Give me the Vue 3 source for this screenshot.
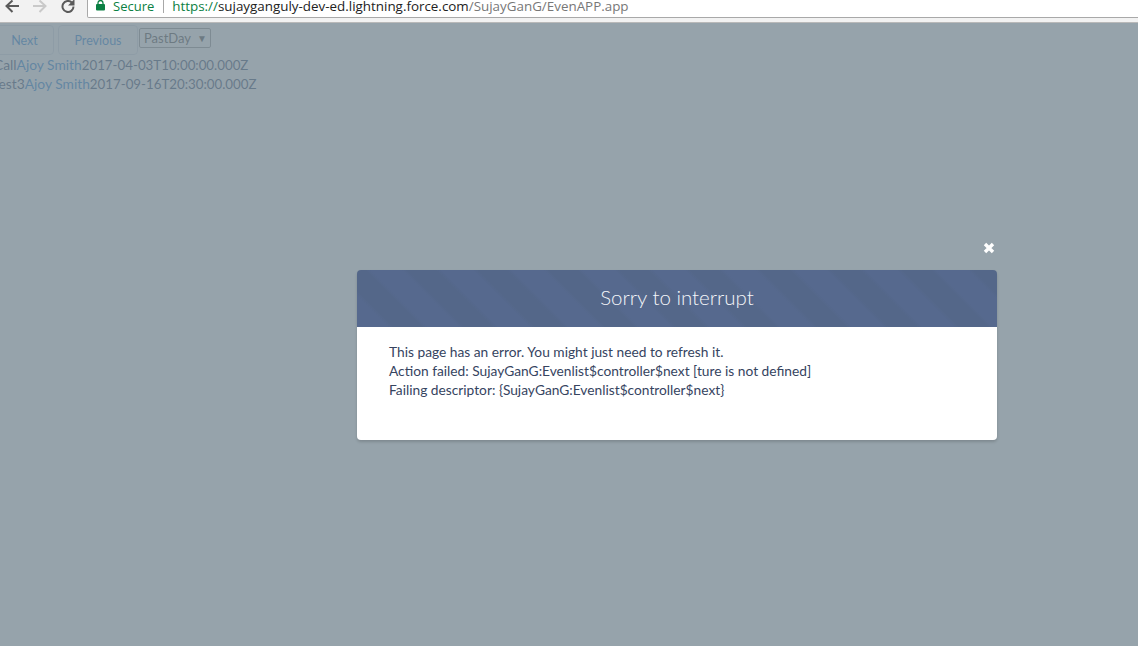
<template>
  <div class="page">
    <div class="toolbar">
      <svg class="nav-icon back" width="18" height="16" viewBox="0 0 18 16"><path d="M16 6H4M9.500.5 3.500 6l6 6" fill="none" stroke="#5a5a5a" stroke-width="2" /></svg>
      <svg class="nav-icon forward" width="18" height="16" viewBox="0 0 18 16"><path d="M2 6h12M8.500.5l6 5.500-6 6" fill="none" stroke="#c9c9c9" stroke-width="2" /></svg>
      <svg class="nav-icon reload" width="16" height="16" viewBox="0 0 16 16"><path d="M13.500 6.500a5.500 5.500 0 1 1-1.700-4" fill="none" stroke="#5a5a5a" stroke-width="2" /><path d="M14.500-1v6.500H8z" fill="#5a5a5a" /></svg>
      <div class="url-box">
        <svg class="lock" width="9" height="11" viewBox="0 0 9 11"><path d="M2 4.500V3a2.500 2.500 0 0 1 5 0v1.500" fill="none" stroke="#0b8043" stroke-width="1.300" /><rect y="4" width="9" height="6.500" rx="1" fill="#0b8043" /></svg>
        <span class="secure">Secure</span>
        <span class="divider"></span>
        <span class="url"><span class="scheme">https://</span>sujayganguly-dev-ed.lightning.force.com<span class="path">/SujayGanG/EvenAPP.app</span></span>
      </div>
    </div>

    <div class="content">
      <div class="controls">
        <button class="btn btn-next">Next</button>
        <button class="btn btn-prev">Previous</button>
        <div class="select">PastDay <span class="caret">▼</span></div>
      </div>
      <div v-for="row in events" :key="row.name" class="event-row" :class="row.cls">
        <span>{{ row.name }}</span><a>{{ row.owner }}</a><span class="date">{{ row.date }}</span>
      </div>

      <div class="backdrop">
        <div class="modal-wrap">
          <svg class="close" width="14" height="14" viewBox="0 0 14 14"><path d="M3 3l8 8M11 3l-8 8" fill="none" stroke="#fff" stroke-width="3.400" /></svg>
          <div class="modal">
            <div class="modal-header">Sorry to interrupt</div>
            <div class="modal-body">
              <div v-for="line in messages" :key="line">{{ line }}</div>
            </div>
          </div>
        </div>
      </div>
    </div>
  </div>
</template>

<script setup>
const events = [
  { name: "Call", owner: "Ajoy Smith", date: "2017-04-03T10:00:00.000Z", cls: "row-one" },
  { name: "Test3", owner: "Ajoy Smith", date: "2017-09-16T20:30:00.000Z", cls: "row-two" },
];

const messages = [
  "This page has an error. You might just need to refresh it.",
  "Action failed: SujayGanG:Evenlist$controller$next [ture is not defined]",
  "Failing descriptor: {SujayGanG:Evenlist$controller$next}",
];
</script>

<style>
html,
body {
  margin: 0;
  overflow: hidden;
}
</style>

<style scoped>
.page {
  width: 1138px;
  height: 646px;
  overflow: hidden;
  display: flex;
  flex-direction: column;
  font-family: Lato, "Open Sans", sans-serif;
}

.toolbar {
  height: 22px;
  flex-shrink: 0;
  display: flex;
  align-items: flex-start;
  background: #f2f2f2;
  border-bottom: 1px solid #b9b9b9;
}

.nav-icon {
  flex-shrink: 0;
}

.back {
  margin-left: 3px;
}

.forward {
  margin-left: 10px;
}

.reload {
  margin-left: 11px;
}

.url-box {
  margin-left: 11px;
  height: 18px;
  flex: 1 0 1060px;
  box-sizing: border-box;
  display: flex;
  align-items: flex-start;
  padding-left: 8px;
  background: #fff;
  border: 1px solid #a9a9a9;
  border-top: 0;
  border-radius: 0 0 2px 2px;
  font-family: "Open Sans", sans-serif;
  font-size: 13.4px;
  line-height: 13px;
  white-space: nowrap;
}

.lock {
  flex-shrink: 0;
}

.secure {
  margin-left: 8px;
  color: #0b8043;
  font-size: 13px;
}

.divider {
  width: 1px;
  height: 13px;
  margin: 0 8px 0 9px;
  background: #a8a8a8;
}

.url {
  color: #222;
}

.scheme {
  color: #0b8043;
}

.path {
  color: #777;
}

.content {
  position: relative;
  flex: 1;
  padding-top: 2px;
  font-size: 13.8px;
  color: #16325c;
}

.controls {
  display: flex;
  align-items: flex-start;
  margin-left: -8px;
  height: 30px;
}

.btn {
  height: 30px;
  box-sizing: border-box;
  font: inherit;
  font-size: 12.5px;
  color: #0070d2;
  background: #fff;
  border: 1px solid #d8dde6;
  border-radius: 4px;
}

.btn-next {
  width: 62px;
  padding-left: 9px;
}

.btn-prev {
  width: 80px;
  margin-left: 4px;
}

.select {
  margin: 3px 0 0 1px;
  width: 72px;
  height: 20px;
  box-sizing: border-box;
  display: flex;
  align-items: center;
  padding-left: 4px;
  font-size: 13px;
  color: #333;
  border: 1px solid #888;
  border-radius: 2px;
}

.caret {
  margin-left: 6px;
  font-size: 10px;
}

.event-row {
  height: 19px;
  line-height: 19px;
  white-space: nowrap;
}

.event-row a {
  color: #0070d2;
}

.date {
  font-size: 13.3px;
}

.row-one {
  margin-left: -6px;
}

.row-two {
  margin-left: -8px;
}

.backdrop {
  position: absolute;
  inset: 0;
  background: rgba(124, 140, 150, 0.8);
}

.modal-wrap {
  position: absolute;
  left: 357px;
  top: 247px;
  width: 640px;
}

.close {
  position: absolute;
  right: 1px;
  top: -29px;
}

.modal {
  border-radius: 4px;
  overflow: hidden;
  box-shadow: 0 2px 3px rgba(0, 0, 0, 0.16);
}

.modal-header {
  height: 57px;
  box-sizing: border-box;
  padding-bottom: 3px;
  display: flex;
  align-items: center;
  justify-content: center;
  color: #f4f6f9;
  font-size: 20.5px;
  font-weight: 300;
  background: repeating-linear-gradient(45deg, #56698e 0 22px, #546789 26px 46px, #56698e 50px);
}

.modal-body {
  height: 113px;
  box-sizing: border-box;
  padding: 15px 32px;
  background: #fff;
  color: #36445f;
  font-size: 13.75px;
  line-height: 19px;
}
</style>
